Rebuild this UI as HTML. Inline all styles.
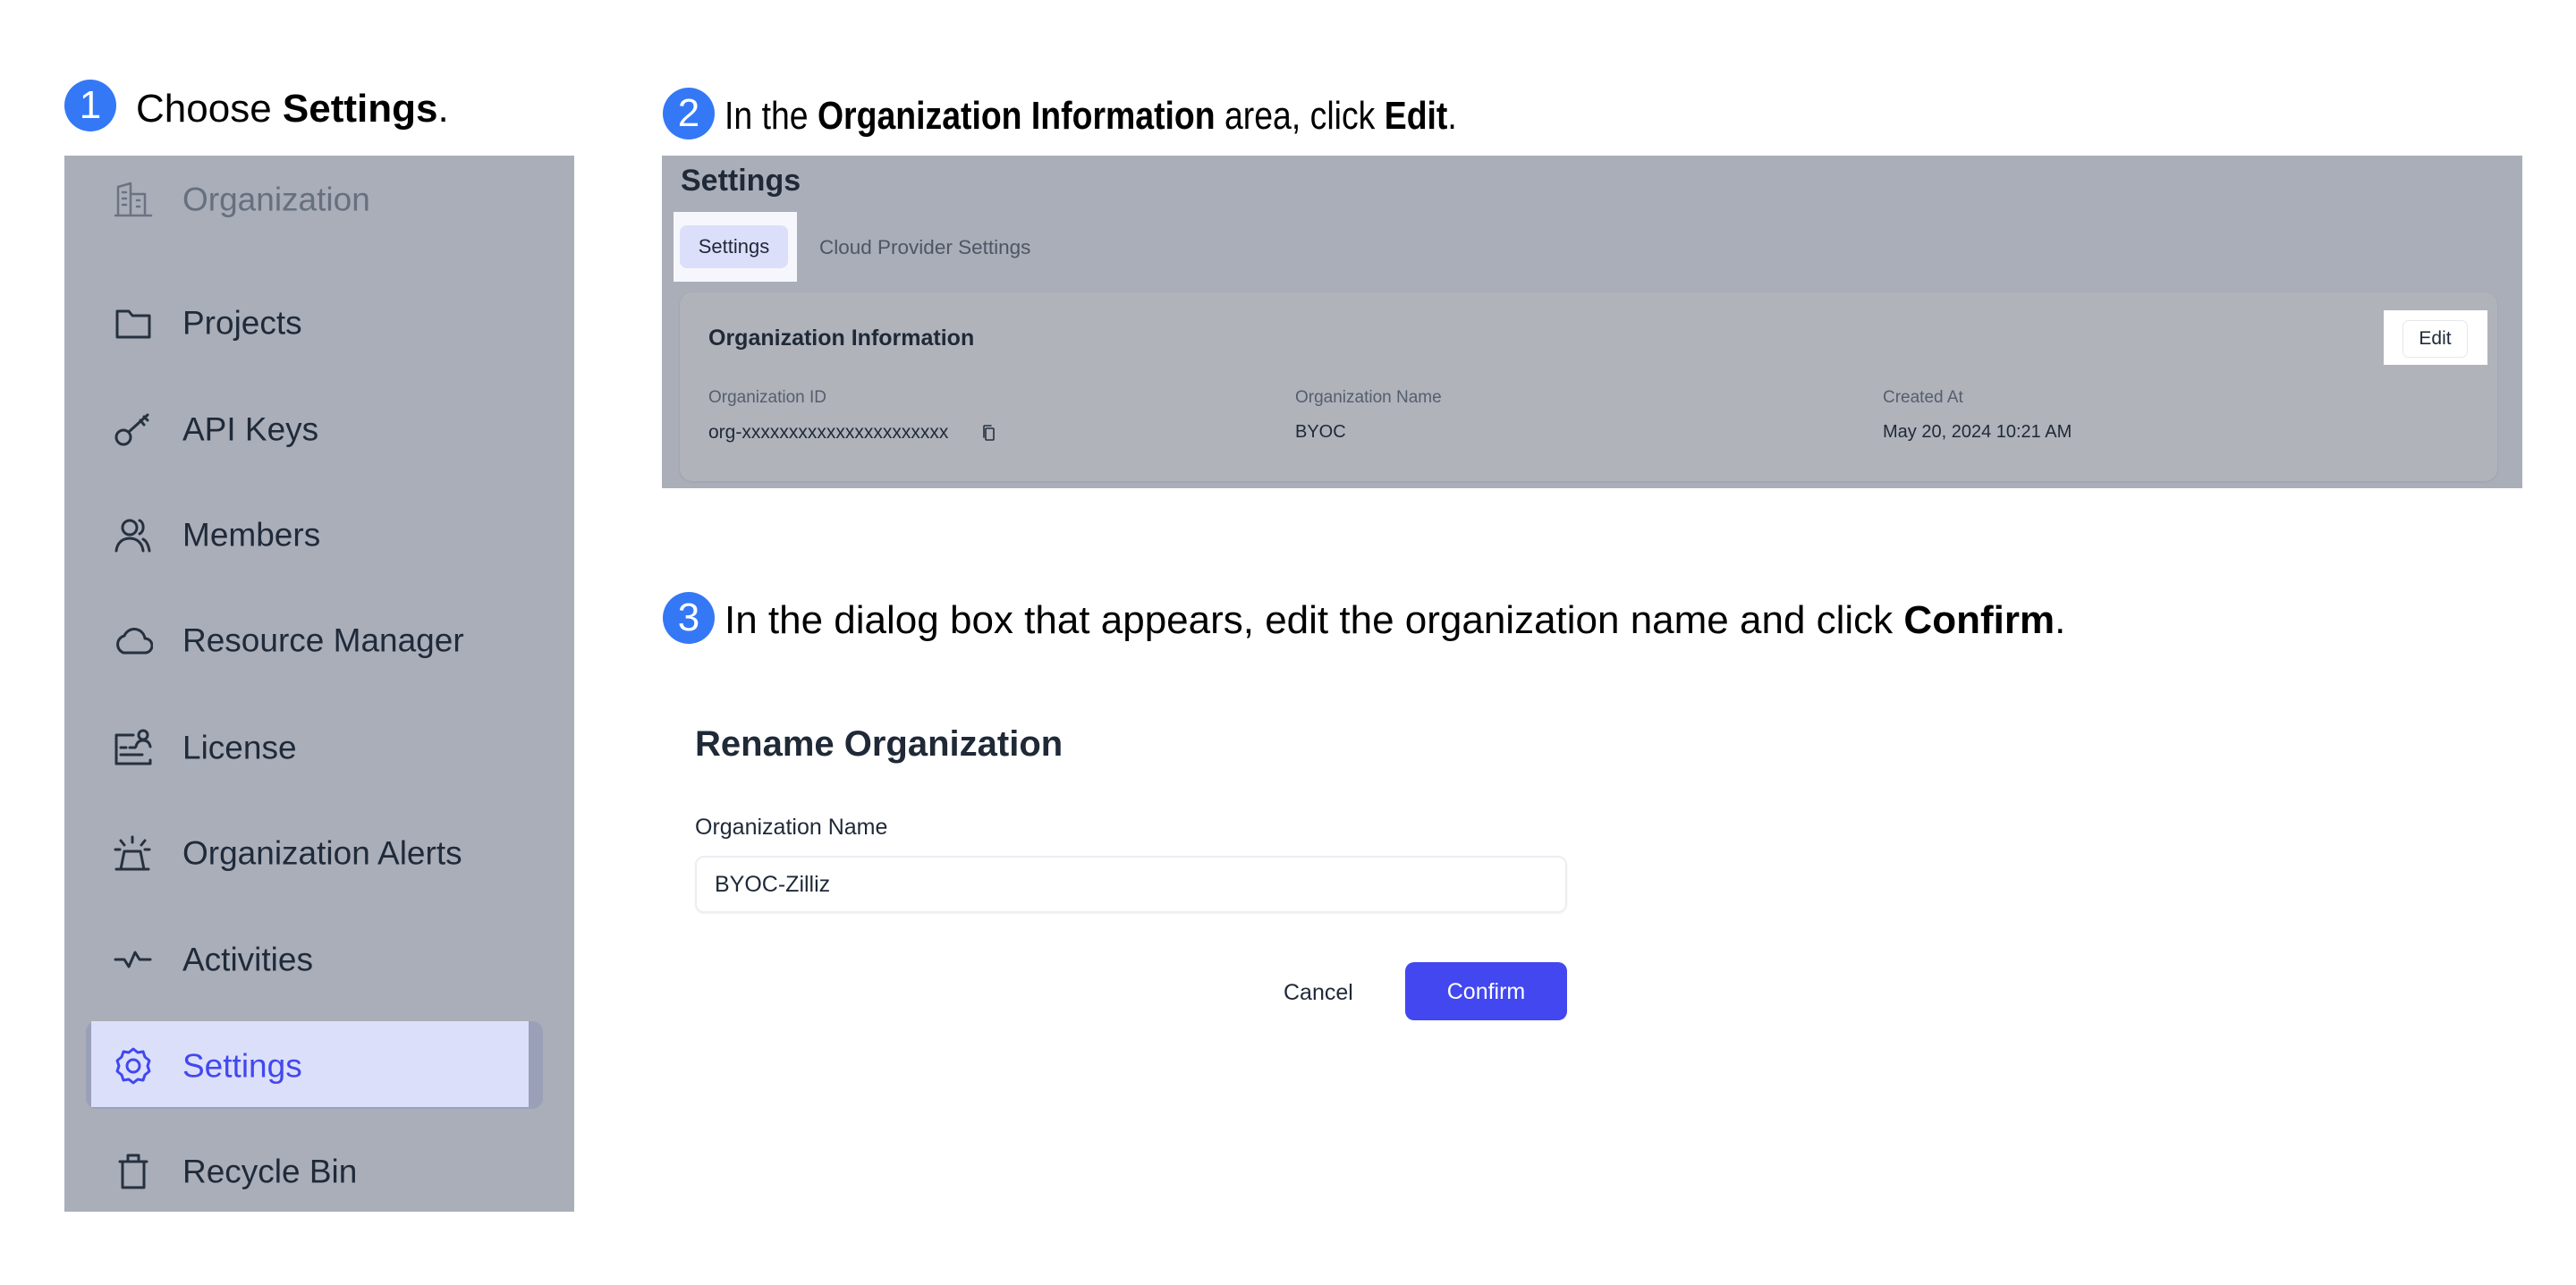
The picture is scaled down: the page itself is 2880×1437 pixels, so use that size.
<!DOCTYPE html>
<html><head><meta charset="utf-8"><style>
*{margin:0;padding:0;box-sizing:border-box}
body{width:2880px;height:1437px;background:#fff;font-family:"Liberation Sans",sans-serif;position:relative;overflow:hidden;color:#1f2937}
.a{position:absolute;white-space:nowrap}
.num{position:absolute;width:58px;height:58px;border-radius:50%;background:#3478f6;color:#fff;font-size:44px;text-align:center;line-height:58px}
.step{position:absolute;font-size:44px;color:#000;line-height:1;white-space:nowrap}
.nav{position:absolute;left:204px;font-size:37px;color:#1f2a3a;line-height:1;transform:translateY(-50%)}
.ic{position:absolute;left:127px;width:44px;height:44px;transform:translateY(-50%)}
svg{fill:none;stroke:#263140;stroke-width:3;stroke-linecap:round;stroke-linejoin:round}
</style></head><body>

<div class="num" style="left:72px;top:89px">1</div>
<div class="step" style="left:152px;top:100px">Choose <b>Settings</b>.</div>

<div class="a" style="left:72px;top:174px;width:570px;height:1181px;background:#aaaeb8"></div>
<svg class="ic" style="top:223px;stroke:#6b7383;stroke-width:2.5" viewBox="0 0 44 44"><path d="M2 40h40M5 40V8l14-4v36M19 16h16v24M10 14h4M10 21h4M10 28h4M26 23h3M26 30h3"/></svg>
<div class="nav" style="top:223px;color:#66707f">Organization</div>

<svg class="ic" style="top:361px" viewBox="0 0 44 44"><path d="M4 9h13l4 5h19v24H4z"/></svg>
<div class="nav" style="top:361px">Projects</div>

<svg class="ic" style="top:480px" viewBox="0 0 44 44"><circle cx="11" cy="31" r="8"/><path d="M17 25L38 6M30 12l4 5M34 8l4 4"/></svg>
<div class="nav" style="top:480px">API Keys</div>

<svg class="ic" style="top:598px" viewBox="0 0 44 44"><circle cx="18" cy="14" r="8"/><path d="M3 40c1-9 7-14 15-14s14 5 15 14M29 6c5 2 6 12 0 15M33 27c4 2 6 7 7 13"/></svg>
<div class="nav" style="top:598px">Members</div>

<svg class="ic" style="top:716px" viewBox="0 0 44 44"><path d="M11 36h24a8 8 0 0 0 0-16a12 12 0 0 0-23-3A10 10 0 0 0 11 36z"/></svg>
<div class="nav" style="top:716px">Resource Manager</div>

<svg class="ic" style="top:836px" viewBox="0 0 44 44"><path d="M22 8H3v32h38v-4M8 22h6M18 22h6M8 30h24"/><circle cx="33" cy="8" r="5"/><path d="M25 21c1-5 4-7 8-7s7 2 8 7"/></svg>
<div class="nav" style="top:836px">License</div>

<svg class="ic" style="top:954px" viewBox="0 0 44 44"><path d="M3 40h36M8 40l4-20h18l4 20M21 4v6M8 8l4 5M35 8l-4 5M2 18h5M35 18h5"/></svg>
<div class="nav" style="top:954px">Organization Alerts</div>

<svg class="ic" style="top:1073px" viewBox="0 0 44 44"><path d="M2 22h10l5 8 7-16 5 8h12"/></svg>
<div class="nav" style="top:1073px">Activities</div>

<div class="a" style="left:96px;top:1142px;width:511px;height:98px;background:#9aa0b7;border-radius:12px"></div>
<div class="a" style="left:102px;top:1142px;width:489px;height:96px;background:#dcdffa"></div>
<svg class="ic" style="top:1192px;stroke:#4148ee" viewBox="0 0 44 44"><path d="M22 3l5 4 6-1 2 6 5 4-2 6 2 6-5 4-2 6-6-1-5 4-5-4-6 1-2-6-5-4 2-6-2-6 5-4 2-6 6 1z"/><circle cx="22" cy="22" r="7"/></svg>
<div class="nav" style="top:1192px;color:#4148ee">Settings</div>

<svg class="ic" style="top:1310px" viewBox="0 0 44 44"><path d="M7 11h30M16 11V4h12v7M10 11v29h24V11"/></svg>
<div class="nav" style="top:1310px">Recycle Bin</div>

<!-- step 2 -->
<div class="num" style="left:741px;top:98px">2</div>
<div class="step" style="left:810px;top:108px;transform-origin:0 0;transform:scaleX(0.85)">In the <b>Organization Information</b> area, click <b>Edit</b>.</div>

<div class="a" style="left:740px;top:174px;width:2080px;height:372px;background:#aaaeb8"></div>
<div class="a" style="left:761px;top:183px;font-size:34px;font-weight:bold;color:#1f2937">Settings</div>
<div class="a" style="left:753px;top:237px;width:138px;height:78px;background:#f6f7fd"></div>
<div class="a" style="left:760px;top:252px;width:121px;height:48px;background:#dcdffa;border-radius:8px;font-size:22px;line-height:48px;text-align:center;color:#1f2937">Settings</div>
<div class="a" style="left:916px;top:264px;font-size:22.5px;color:#4d5666">Cloud Provider Settings</div>

<div class="a" style="left:760px;top:327px;width:2032px;height:211px;background:#b0b3ba;border-radius:14px;box-shadow:0 1px 3px rgba(0,0,0,.08)"></div>
<div class="a" style="left:792px;top:364px;font-size:25px;font-weight:bold;color:#1f2937">Organization Information</div>
<div class="a" style="left:2665px;top:347px;width:116px;height:61px;background:#fff"></div>
<div class="a" style="left:2686px;top:358px;width:73px;height:42px;border:1px solid #e5e7eb;border-radius:7px;background:#fff;font-size:21px;line-height:40px;text-align:center;color:#1f2937">Edit</div>

<div class="a" style="left:792px;top:434px;font-size:19px;color:#555e6d">Organization ID</div>
<div class="a" style="left:1448px;top:434px;font-size:19px;color:#555e6d">Organization Name</div>
<div class="a" style="left:2105px;top:434px;font-size:19px;color:#555e6d">Created At</div>
<div class="a" style="left:792px;top:472px;font-size:21px;color:#1f2937">org-xxxxxxxxxxxxxxxxxxxxxx</div>
<svg class="a" style="left:1098px;top:474px;width:16px;height:20px;stroke-width:1.6" viewBox="0 0 16 20"><rect x="4" y="5" width="9" height="13" rx="1"/><path d="M2 15V3a1 1 0 0 1 1-1h7"/></svg>
<div class="a" style="left:1448px;top:472px;font-size:20px;color:#1f2937">BYOC</div>
<div class="a" style="left:2105px;top:472px;font-size:20px;color:#1f2937">May 20, 2024 10:21 AM</div>

<!-- step 3 -->
<div class="num" style="left:741px;top:662px">3</div>
<div class="step" style="left:810px;top:672px">In the dialog box that appears, edit the organization name and click <b>Confirm</b>.</div>

<div class="a" style="left:777px;top:810px;font-size:40px;font-weight:bold;color:#1f2937">Rename Organization</div>
<div class="a" style="left:777px;top:911px;font-size:25px;color:#1f2937">Organization Name</div>
<div class="a" style="left:777px;top:957px;width:975px;height:64px;border:2px solid #eceef2;border-radius:10px;box-shadow:0 1px 2px rgba(0,0,0,.05)"></div>
<div class="a" style="left:799px;top:975px;font-size:25px;color:#1f2937">BYOC-Zilliz</div>
<div class="a" style="left:1435px;top:1096px;font-size:25px;color:#1f2937">Cancel</div>
<div class="a" style="left:1571px;top:1076px;width:181px;height:65px;background:#4247f0;border-radius:10px;color:#fff;font-size:25px;line-height:67px;text-align:center">Confirm</div>

</body></html>
